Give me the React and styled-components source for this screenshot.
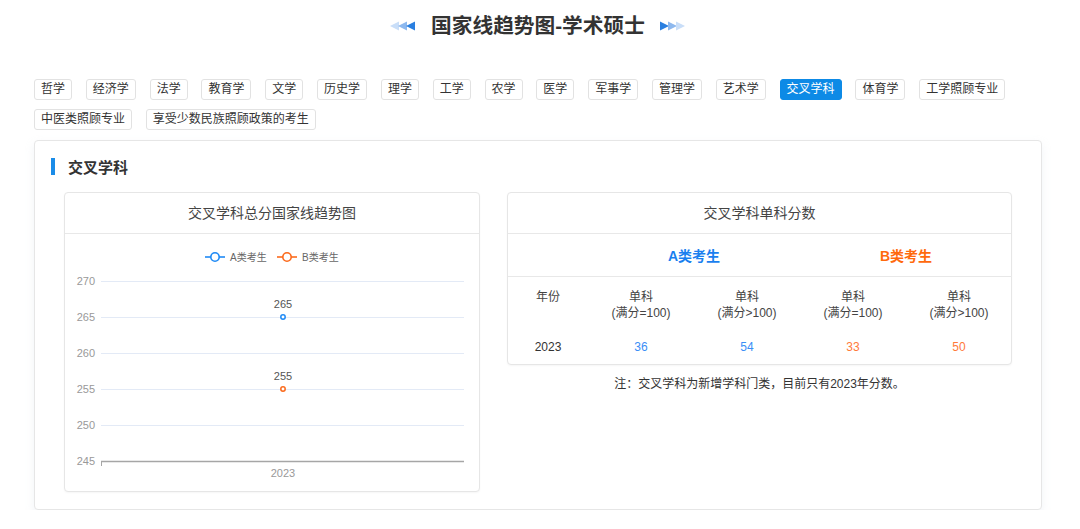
import React from "react";
import styled, { createGlobalStyle } from "styled-components";

const Global = createGlobalStyle`
  html, body { margin: 0; padding: 0; background: #fff; }
  body { font-family: "Liberation Sans", "Noto Sans CJK SC", sans-serif; color: #333; }
  * { box-sizing: border-box; }
`;

const Page = styled.div`
  width: 1008px;
  margin-left: 34px;
  padding-top: 12px;
`;

const TitleBar = styled.div`
  display: flex;
  align-items: center;
  justify-content: center;
  gap: 15px;
  height: 28px;
`;

const Title = styled.h1`
  margin: 0;
  font-size: 20.7px;
  font-weight: bold;
  color: #333;
  line-height: 28px;
`;

const Tabs = styled.div`
  display: flex;
  flex-wrap: wrap;
  column-gap: 13.8px;
  row-gap: 9px;
  margin-top: 39px;
`;

const Tab = styled.div`
  height: 21px;
  line-height: 19px;
  padding: 0 6px;
  font-size: 12px;
  border: 1px solid ${(p) => (p.$active ? "#0d8ae6" : "#e2e2e2")};
  border-radius: 3px;
  background: ${(p) => (p.$active ? "#0d8ae6" : "#fff")};
  color: ${(p) => (p.$active ? "#fff" : "#333")};
  white-space: nowrap;
`;

const Panel = styled.section`
  margin-top: 10px;
  border: 1px solid #e6e6e6;
  border-radius: 4px;
  box-shadow: 0 4px 8px rgba(200, 210, 225, 0.25);
  padding: 16px 29px 17px 29px;
  background: #fff;
`;

const PanelHead = styled.div`
  display: flex;
  align-items: center;
  gap: 13px;
  margin-left: -13px;
  height: 18px;
`;

const Bar = styled.span`
  width: 4px;
  height: 17px;
  background: #1a8ce8;
`;

const PanelTitle = styled.h2`
  margin: 0;
  font-size: 15px;
  font-weight: bold;
  color: #333;
`;

const Cards = styled.div`
  display: flex;
  gap: 27px;
  margin-top: 17px;
  align-items: flex-start;
`;

const Card = styled.div`
  width: ${(p) => p.$w}px;
  border: 1px solid #e6e6e6;
  border-radius: 4px;
  box-shadow: 0 1px 2px rgba(0, 0, 0, 0.04);
  background: #fff;
`;

const CardTitle = styled.div`
  height: 41px;
  line-height: 40px;
  text-align: center;
  font-size: 14px;
  color: #444;
  border-bottom: 1px solid #e8e8e8;
`;

const RightCol = styled.div`
  display: flex;
  flex-direction: column;
  align-items: center;
`;

const Table = styled.table`
  border-collapse: collapse;
  width: 503px;
  table-layout: fixed;
  font-size: 12px;
`;

const GroupCell = styled.th`
  height: 42px;
  font-size: 14px;
  font-weight: bold;
  color: ${(p) => p.$c};
  border-bottom: 1px solid #e8e8e8;
  text-align: center;
`;

const HeadCell = styled.td`
  text-align: center;
  vertical-align: top;
  padding-top: 12px;
  line-height: 16px;
  color: #444;
  height: 58px;
`;

const ValCell = styled.td`
  text-align: center;
  height: 30px;
  padding-bottom: 6px;
  color: ${(p) => p.$c || "#333"};
  font-size: 12px;
`;

const Note = styled.p`
  margin: 9px 0 0;
  font-size: 12px;
  color: #333;
`;

const Arrows = ({ dir }) => {
  const colors = ["#c9def8", "#8db8ee", "#2a7fe0"];
  const order = dir === "left" ? colors : [...colors].reverse();
  return (
    <svg width="26" height="10" viewBox="0 0 26 10">
      {order.map((c, i) => {
        const x = i * 8;
        const d =
          dir === "left"
            ? `M${x} 5 L${x + 9} 0.5 L${x + 9} 9.5 Z`
            : `M${x + 9} 5 L${x} 0.5 L${x} 9.5 Z`;
        return <path key={i} d={d} fill={c} />;
      })}
    </svg>
  );
};

const BLUE = "#1f8af5";
const ORANGE = "#fb6a1c";

const Chart = () => {
  const yTicks = [270, 265, 260, 255, 250, 245];
  const yOf = (v) => 47 + ((270 - v) / 5) * 36;
  const px = 218;
  return (
    <svg width="414" height="257" viewBox="0 0 414 257" style={{ display: "block" }}>
      <g fontFamily="Liberation Sans, Noto Sans CJK SC, sans-serif" fontSize="10">
        <line x1="140" y1="23" x2="160" y2="23" stroke={BLUE} strokeWidth="1.6" />
        <circle cx="150" cy="23" r="4.2" fill="#fff" stroke={BLUE} strokeWidth="1.6" />
        <text x="165" y="26.5" fill="#666">A类考生</text>
        <line x1="212" y1="23" x2="232" y2="23" stroke={ORANGE} strokeWidth="1.6" />
        <circle cx="222" cy="23" r="4.2" fill="#fff" stroke={ORANGE} strokeWidth="1.6" />
        <text x="237" y="26.5" fill="#666">B类考生</text>
      </g>
      <g fontFamily="Liberation Sans, sans-serif" fontSize="11" fill="#999">
        {yTicks.map((v) => (
          <g key={v}>
            <text x="30" y={yOf(v) + 3.5} textAnchor="end">{v}</text>
            {v !== 245 && (
              <line x1="36" x2="399" y1={yOf(v) + 0.5} y2={yOf(v) + 0.5} stroke="#e3eaf6" strokeWidth="1" />
            )}
          </g>
        ))}
        <line x1="36" x2="399" y1="227.5" y2="227.5" stroke="#a6a6a6" strokeWidth="1.5" />
        <line x1="36.5" x2="36.5" y1="227" y2="232" stroke="#a6a6a6" strokeWidth="1" />
        <text x={px} y="243" textAnchor="middle">2023</text>
      </g>
      <g fontFamily="Liberation Sans, sans-serif" fontSize="11" fill="#555">
        <text x={px} y={yOf(265) - 9} textAnchor="middle">265</text>
        <circle cx={px} cy={yOf(265)} r="2.2" fill="#fff" stroke={BLUE} strokeWidth="1.5" />
        <text x={px} y={yOf(255) - 9} textAnchor="middle">255</text>
        <circle cx={px} cy={yOf(255)} r="2.2" fill="#fff" stroke={ORANGE} strokeWidth="1.5" />
      </g>
    </svg>
  );
};

const tabs = [
  "哲学", "经济学", "法学", "教育学", "文学", "历史学", "理学", "工学", "农学", "医学",
  "军事学", "管理学", "艺术学", "交叉学科", "体育学", "工学照顾专业", "中医类照顾专业",
  "享受少数民族照顾政策的考生",
];

export default function App() {
  return (
    <>
      <Global />
      <Page>
        <TitleBar>
          <Arrows dir="left" />
          <Title>国家线趋势图-学术硕士</Title>
          <Arrows dir="right" />
        </TitleBar>
        <Tabs>
          {tabs.map((t) => (
            <Tab key={t} $active={t === "交叉学科"}>{t}</Tab>
          ))}
        </Tabs>
        <Panel>
          <PanelHead>
            <Bar />
            <PanelTitle>交叉学科</PanelTitle>
          </PanelHead>
          <Cards>
            <Card $w={416}>
              <CardTitle>交叉学科总分国家线趋势图</CardTitle>
              <Chart />
            </Card>
            <RightCol>
              <Card $w={505}>
                <CardTitle>交叉学科单科分数</CardTitle>
                <Table>
                  <colgroup>
                    <col style={{ width: 80 }} />
                    <col style={{ width: 106 }} />
                    <col style={{ width: 106 }} />
                    <col style={{ width: 106 }} />
                    <col style={{ width: 106 }} />
                  </colgroup>
                  <thead>
                    <tr>
                      <GroupCell $c="#fff" />
                      <GroupCell colSpan={2} $c="#1a7fef">A类考生</GroupCell>
                      <GroupCell colSpan={2} $c="#ff6a0d">B类考生</GroupCell>
                    </tr>
                  </thead>
                  <tbody>
                    <tr>
                      <HeadCell>年份</HeadCell>
                      <HeadCell>单科<br />(满分=100)</HeadCell>
                      <HeadCell>单科<br />(满分&gt;100)</HeadCell>
                      <HeadCell>单科<br />(满分=100)</HeadCell>
                      <HeadCell>单科<br />(满分&gt;100)</HeadCell>
                    </tr>
                    <tr>
                      <ValCell>2023</ValCell>
                      <ValCell $c="#3a8ef6">36</ValCell>
                      <ValCell $c="#3a8ef6">54</ValCell>
                      <ValCell $c="#ff7a3a">33</ValCell>
                      <ValCell $c="#ff7a3a">50</ValCell>
                    </tr>
                  </tbody>
                </Table>
              </Card>
              <Note>注：交叉学科为新增学科门类，目前只有2023年分数。</Note>
            </RightCol>
          </Cards>
        </Panel>
      </Page>
    </>
  );
}
